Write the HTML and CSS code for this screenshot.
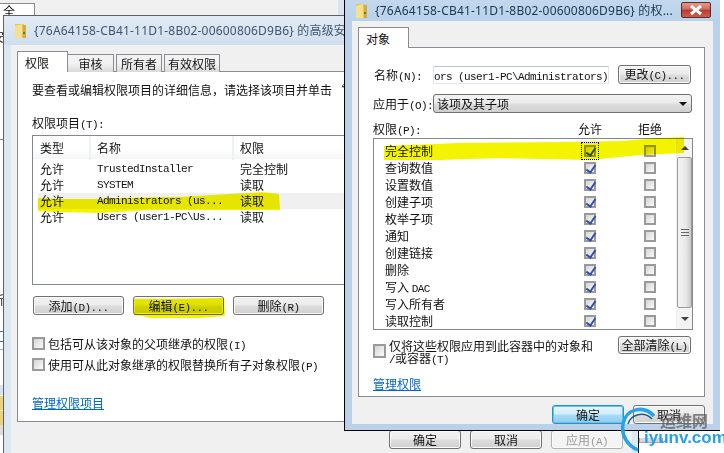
FILE: index.html
```html
<!DOCTYPE html>
<html lang="zh-CN">
<head>
<meta charset="utf-8">
<title>权限</title>
<link rel="stylesheet" href="styles.css">
</head>
<body>
<div class="desk">
  <div class="back-top"><div class="back-tab">全</div></div>
  <div class="back-strip">
    <span class="st st-a">安</span><span class="st st-b"></span><span class="st st-c">新</span>
    <span class="st st-d1"></span><span class="st st-d"></span><span class="st st-e"></span>
    <span class="st st-f"></span><span class="st st-g"></span><span class="st st-g"></span><span class="st st-h"></span>
  </div>
  <div class="back-right"><span class="back-right-btn"></span></div>

  <section class="win win1">
    <header class="title">
      <svg class="folder" viewBox="0 0 13 16"><path d="M1 1h9v14H1z" fill="#e9c25e"/><path d="M1 3l7-2v14l-7 0z" fill="#f5e08e"/><path d="M9 2h3v13H9z" fill="#d8a93c"/><path d="M9 9h2v2H9z" fill="#4b8a3d"/></svg>
      <span class="title-text inactive">{76A64158-CB41-11D1-8B02-00600806D9B6} 的高级安全设置</span>
    </header>
    <div class="body body1">
      <nav class="tabs">
        <div class="tab on">权限</div>
        <div class="tab t2">审核</div>
        <div class="tab t3">所有者</div>
        <div class="tab t4">有效权限</div>
      </nav>
      <div class="panel panel1">
        <p class="intro">要查看或编辑权限项目的详细信息，请选择该项目并单击 “编辑”。</p>
        <div class="lbl lbl-items">权限项目<span class="m">(T):</span></div>
        <div class="acl">
          <div class="acl-head"><span class="h1">类型</span><span class="h2">名称</span><span class="h3">权限</span></div>
          <div class="acl-row"><span>允许</span><span class="m">TrustedInstaller</span><span>完全控制</span></div>
          <div class="acl-row"><span>允许</span><span class="m">SYSTEM</span><span>读取</span></div>
          <div class="acl-row sel"><span>允许</span><span class="m">Administrators (us...</span><span>读取</span></div>
          <div class="acl-row"><span>允许</span><span class="m">Users (user1-PC\Us...</span><span>读取</span></div>
        </div>
        <div class="btn-row">
          <button class="btn b91">添加<span class="m">(D)...</span></button>
          <button class="btn b91">编辑<span class="m">(E)...</span></button>
          <button class="btn b91">删除<span class="m">(R)</span></button>
        </div>
        <label class="chk-row first"><i class="cb"></i><span>包括可从该对象的父项继承的权限<span class="m">(I)</span></span></label>
        <label class="chk-row"><i class="cb"></i><span>使用可从此对象继承的权限替换所有子对象权限<span class="m">(P)</span></span></label>
        <a class="link link1">管理权限项目</a>
      </div>
      <div class="foot foot1">
        <button class="btn b72">确定</button>
        <button class="btn b72">取消</button>
        <button class="btn b72 off">应用<span class="m">(A)</span></button>
      </div>
    </div>
  </section>

  <section class="win win2">
    <header class="title title2">
      <svg class="folder" viewBox="0 0 13 16"><path d="M1 1h9v14H1z" fill="#e9c25e"/><path d="M1 3l7-2v14l-7 0z" fill="#f5e08e"/><path d="M9 2h3v13H9z" fill="#d8a93c"/><path d="M9 9h2v2H9z" fill="#4b8a3d"/></svg>
      <span class="title-text">{76A64158-CB41-11D1-8B02-00600806D9B6} 的权...</span>
      <span class="close"><svg viewBox="0 0 14 10" width="14" height="10"><path d="M2 1l10 8M12 1L2 9" stroke="#fff" stroke-width="3"/></svg></span>
    </header>
    <div class="body body2">
      <nav class="tabs"><div class="tab on">对象</div></nav>
      <div class="panel panel2">
        <div class="f-row f-name">
          <span class="f-lbl">名称<span class="m">(N):</span></span>
          <div class="input"><span class="m">ors (user1-PC\Administrators)</span></div>
          <button class="btn b73 up1">更改<span class="m">(C)...</span></button>
        </div>
        <div class="f-row f-apply">
          <span class="f-lbl">应用于<span class="m">(O):</span></span>
          <div class="select">该项及其子项<i class="caret"></i></div>
        </div>
        <div class="p-head"><span>权限<span class="m">(P):</span></span><span>允许</span><span>拒绝</span></div>
        <div class="plist">
          <div class="prows">
            <div class="p-row"><span>完全控制</span><i class="cb s on focus"></i><i class="cb s"></i></div>
            <div class="p-row"><span>查询数值</span><i class="cb s on"></i><i class="cb s"></i></div>
            <div class="p-row"><span>设置数值</span><i class="cb s on"></i><i class="cb s"></i></div>
            <div class="p-row"><span>创建子项</span><i class="cb s on"></i><i class="cb s"></i></div>
            <div class="p-row"><span>枚举子项</span><i class="cb s on"></i><i class="cb s"></i></div>
            <div class="p-row"><span>通知</span><i class="cb s on"></i><i class="cb s"></i></div>
            <div class="p-row"><span>创建链接</span><i class="cb s on"></i><i class="cb s"></i></div>
            <div class="p-row"><span>删除</span><i class="cb s on"></i><i class="cb s"></i></div>
            <div class="p-row"><span>写入 <span class="m">DAC</span></span><i class="cb s on"></i><i class="cb s"></i></div>
            <div class="p-row"><span>写入所有者</span><i class="cb s on"></i><i class="cb s"></i></div>
            <div class="p-row"><span>读取控制</span><i class="cb s on"></i><i class="cb s"></i></div>
          </div>
          <div class="sb">
            <div class="sb-end"><i class="arr-up"></i></div>
            <div class="sb-thumb"><i class="grip"></i></div>
            <div class="sb-end end2"><i class="arr-down"></i></div>
          </div>
        </div>
        <div class="only-row">
          <i class="cb only-cb"></i>
          <span class="only-text">仅将这些权限应用到此容器中的对象和<br><span class="m">/</span>或容器<span class="m">(T)</span></span>
          <button class="btn b73 clear">全部清除<span class="m">(L)</span></button>
        </div>
        <a class="link link2">管理权限</a>
      </div>
      <div class="foot foot2">
        <button class="btn b72 default">确定</button>
        <button class="btn b72">取消</button>
      </div>
    </div>
  </section>

  <svg class="marks" viewBox="0 0 724 453" width="724" height="453">
    <polygon fill="#f4f400" points="38,198 60,199 100,199 120,198 180,197 230,194 262,192 279,194 280,210 240,210 200,210 150,210 100,213 60,212 38,211"/>
    <polygon fill="#f4f400" points="134,299 170,299 224,298 225,316 200,318 150,318 142,316 134,315"/>
    <polygon fill="#f4f400" points="384,146 460,143 560,142 620,141 660,138 684,137 684,153 640,155 590,160 500,158 440,160 384,160"/>
  </svg>

  <div class="wm">
    <svg class="wm-ring" viewBox="0 0 44 48" width="44" height="48"><path d="M34 11C24 0 6 3 3 19c-2 12 5 22 15 26" fill="none" stroke="#2aa3e2" stroke-width="3.5"/><path d="M32 14C24 6 11 9 8 19" fill="none" stroke="#1b5f8f" stroke-width="1.5"/></svg>
    <span class="wm-cn">运维网</span>
    <span class="wm-en">iyunv.com</span>
  </div>
</div>
</body>
</html>
```
FILE: styles.css
```css
* { box-sizing: border-box; }
html, body { margin: 0; padding: 0; background: #fff; }
.desk {
  position: relative; width: 724px; height: 453px; overflow: hidden; background: #fff;
  font: 12px/16px "Noto Sans CJK SC", "Noto Sans", sans-serif; color: #111;
}
.m { font: 11px/1 "Liberation Mono", monospace; letter-spacing: -0.6px; }

/* desktop behind the dialogs */
.back-top { position: absolute; left: 0; top: 0; width: 344px; height: 16px; background: #f0f0f0; border-right: 6px solid #d7e4f2; }
.back-tab { width: 35px; height: 13px; margin-top: 3px; background: #fff; border: 1px solid #8a8a8a; border-left: 0; border-bottom: 0; line-height: 14px; padding-left: 3px; overflow: hidden; }
.back-strip { position: absolute; left: 0; top: 16px; width: 4px; height: 437px; display: flex; flex-direction: column; background: #fff; overflow: hidden; }
.st { display: block; width: 4px; overflow: hidden; line-height: 14px; flex: none; }
.st-a { height: 15px; margin-top: 14px; direction: rtl; }
.st-b { height: 95px; border-bottom: 1px solid #888; }
.st-c { height: 15px; margin-top: 153px; direction: rtl; }
.st-d1 { height: 24px; border-bottom: 1px solid #2a7ad0; }
.st-d { height: 10px; border-bottom: 1px solid #2a7ad0; }
.st-e { height: 8px; border-bottom: 1px solid #aaa; }
.st-f { height: 45px; border-bottom: 10px solid #d6e4f2; }
.st-g { height: 14px; background: #efd27a; margin-top: 1px; }
.st-h { height: 10px; background: #ddd; }
.back-right { position: absolute; left: 632px; top: 432px; width: 92px; height: 21px; background: #fff; padding: 6px 0 0 7px; }
.back-right-btn { display: block; width: 24px; height: 5px; background: #d8d8d8; border: 1px solid #a5a5a5; border-top: 0; }

/* windows */
.win { position: absolute; }
.win1 { left: 3px; top: 15px; width: 636px; height: 470px; background: #dbe7f3; border: 1px solid #606060; border-right-color: #111; }
.win2 { left: 344px; top: 0; width: 376px; background: #b9d2ea; border-left: 1px solid #000; border-bottom: 1px solid #000; padding-bottom: 6px; }
.title { height: 29px; display: flex; align-items: center; padding-left: 10px; background: linear-gradient(#e3ecf5, #cfdeed); }
.title2 { height: 21px; background: linear-gradient(#c3d8ed, #b9d2ea); padding-left: 10px; position: relative; }
.folder { width: 13px; height: 16px; flex: none; }
.title-text { margin-left: 7px; font: 12px/16px "Noto Sans", "Noto Sans CJK SC", sans-serif; color: #1c3550; white-space: nowrap; letter-spacing: 0.2px; }
.title-text.inactive { color: #3d5670; }
.close { position: absolute; right: 9px; top: 2px; width: 30px; height: 16px; display: flex; align-items: center; justify-content: center; border: 1px solid #5b2a26; border-radius: 2px; background: linear-gradient(#e39b8e 0, #cf6a5a 45%, #b83a2c 50%, #c8604f 100%); }

.body { background: #f0f0f0; padding-top: 6px; }
.body1 { margin: 0 6px 0 7px; padding-left: 6px; padding-right: 6px; height: 440px; }
.body2 { margin: 0 7px; padding-left: 6px; padding-right: 8px; }

/* tabs */
.tabs { display: flex; align-items: flex-end; position: relative; z-index: 1; height: 21px; margin-bottom: -1px; }
.tab { height: 18px; line-height: 17px; text-align: center; border: 1px solid #898c95; border-bottom: 0; background: linear-gradient(#f2f2f2 50%, #d9d9d9); }
.tab.on { width: 51px; height: 21px; line-height: 22px; background: #fff; text-align: left; padding-left: 7px; }
.t2 { width: 46px; border-left: 0; }
.t3 { width: 46px; margin-left: 2px; }
.t4 { width: 56px; margin-left: 2px; }

.panel { background: #fff; border: 1px solid #898c95; }
.panel1 { height: 351px; padding: 10px 0 0 14px; }
.panel2 { height: 350px; padding: 18px 0 0 14px; }

/* left dialog */
.intro { margin: 0; white-space: nowrap; }
.lbl-items { margin-top: 17px; }
.acl { width: 580px; height: 150px; margin-top: 4px; border: 1px solid #828790; }
.acl-head { height: 23px; margin-bottom: 2px; display: grid; grid-template-columns: 58px 143px 1fr; line-height: 24px; background: linear-gradient(#fff, #fff 60%, #f4f5f6); }
.acl-head span { padding-left: 6px; border-right: 2px solid #f0f1f2; }
.acl-head .h1 { padding-left: 7px; }
.acl-row { height: 16px; margin-left: 5px; display: grid; grid-template-columns: 53px 143px 1fr; align-items: center; white-space: nowrap; }
.acl-row span:first-child { padding-left: 2px; }
.acl-row span:nth-child(2) { padding-left: 6px; }
.acl-row span:nth-child(3) { padding-left: 6px; }
.acl-row.sel { background: #f0f0f0; }

button.btn {
  display: block; padding: 0; height: 19px; border: 1px solid #707070; border-radius: 3px; color: #111;
  font: 12px/16px "Noto Sans CJK SC", "Noto Sans", sans-serif; white-space: nowrap;
  background: linear-gradient(#f2f2f2 0, #ebebeb 48%, #dddddd 52%, #cfcfcf 100%);
  box-shadow: inset 0 0 0 1px #fbfbfb;
}
.b91 { width: 91px; }
.b72 { width: 72px; }
.b73 { width: 73px; }
button.btn.off { color: #9a9a9a; border-color: #adb2b5; background: #f4f4f4; }
button.btn.default { border-color: #2a8fc4; background: linear-gradient(#e6f5fc 0, #d2edfa 48%, #a9dbf6 52%, #8ccdf0 100%); box-shadow: inset 0 0 0 1px #5fc7ee; }
.btn-row { display: flex; gap: 9px; margin: 11px 0 0 1px; }

.cb { display: block; flex: none; width: 13px; height: 13px; border: 2px solid #9a9a9a; background: linear-gradient(135deg, #d5d5d5, #fafafa); }
.cb.s { width: 12px; height: 12px; position: relative; }
.cb.on::after { content: ""; position: absolute; left: 2px; top: -1px; width: 4px; height: 8px; border: solid #3350a8; border-width: 0 2px 2px 0; transform: rotate(35deg); }
.cb.focus { outline: 1px dotted #000; outline-offset: 2px; }
.chk-row { display: flex; align-items: center; gap: 3px; height: 13px; margin-top: 8px; white-space: nowrap; }
.chk-row.first { margin-top: 22px; }
.link { display: block; color: #0066cc; text-decoration: underline; }
.link1 { margin-top: 24px; }
.foot { display: flex; gap: 9px; justify-content: flex-end; margin-top: 8px; }
.foot1 { padding-right: 3px; }

/* right dialog */
.f-row { display: flex; align-items: center; }
.f-name { height: 18px; }
.f-lbl { width: 60px; flex: none; white-space: nowrap; }
.f-name .f-lbl { padding-left: 1px; }
.input { width: 176px; height: 18px; line-height: 16px; border: 1px solid #dfe6ee; border-top-color: #bcc7d3; text-align: right; padding-right: 2px; overflow: hidden; white-space: nowrap; }
button.up1 { margin: -2px 0 0 9px; height: 19px; }
.f-apply { margin-top: 10px; }
.select { position: relative; width: 259px; height: 19px; border: 1px solid #707070; border-radius: 3px; padding-left: 3px; line-height: 18px; background: linear-gradient(#f2f2f2 0, #ebebeb 48%, #dddddd 52%, #cfcfcf 100%); }
.caret { position: absolute; right: 4px; top: 7px; border: 4px solid transparent; border-top: 4px solid #111; border-bottom: 0; }
.p-head { display: grid; grid-template-columns: 205px 60px 24px; margin-top: 8px; height: 16px; margin-bottom: 1px; white-space: nowrap; }
.plist { display: flex; width: 320px; height: 192px; border: 1px solid #828790; }
.prows { width: 302px; padding-top: 3px; }
.p-row { display: grid; grid-template-columns: 199px 60px 12px; align-items: center; height: 17px; padding-left: 11px; }
.sb { width: 16px; display: flex; flex-direction: column; background: #f4f4f4; border-left: 1px solid #efefef; }
.sb-end { height: 18px; display: flex; justify-content: center; align-items: center; flex: none; }
.sb-end.end2 { height: 21px; }
.arr-up { border: 4px solid transparent; border-top: 0; border-bottom: 4px solid #444; }
.arr-down { border: 4px solid transparent; border-bottom: 0; border-top: 4px solid #444; }
.sb-thumb { flex: 1; border: 1px solid #9a9a9a; border-radius: 2px; background: linear-gradient(90deg, #f4f4f4, #e8e8e8 60%, #c8c8c8); display: flex; align-items: center; justify-content: center; }
.grip { display: block; width: 8px; height: 7px; border-top: 1px solid #666; border-bottom: 1px solid #666; background: linear-gradient(#666, #666) center / 100% 1px no-repeat; }

.only-row { display: flex; align-items: flex-start; width: 318px; margin-top: 6px; height: 28px; }
.cb.only-cb { width: 13px; height: 14px; margin-top: 8px; }
.only-text { margin: 4px 0 0 3px; line-height: 12px; white-space: nowrap; }
button.clear { margin-left: auto; height: 18px; }
.link2 { margin-top: 12px; }
.foot2 { margin-top: 8px; }

/* highlighter strokes */
.marks { position: absolute; left: 0; top: 0; mix-blend-mode: multiply; pointer-events: none; }

/* watermark */
.wm { position: absolute; left: 620px; top: 403px; width: 104px; height: 50px; }
.wm-ring { position: absolute; left: 0; top: 2px; }
.wm-cn { position: absolute; left: 40px; top: 7px; font-size: 16px; line-height: 20px; font-weight: 700; color: #666; opacity: .8; white-space: nowrap; }
.wm-en { position: absolute; left: 24px; top: 25px; font: 700 17px/20px "Liberation Sans", sans-serif; color: #27a1e3; white-space: nowrap; }
```
